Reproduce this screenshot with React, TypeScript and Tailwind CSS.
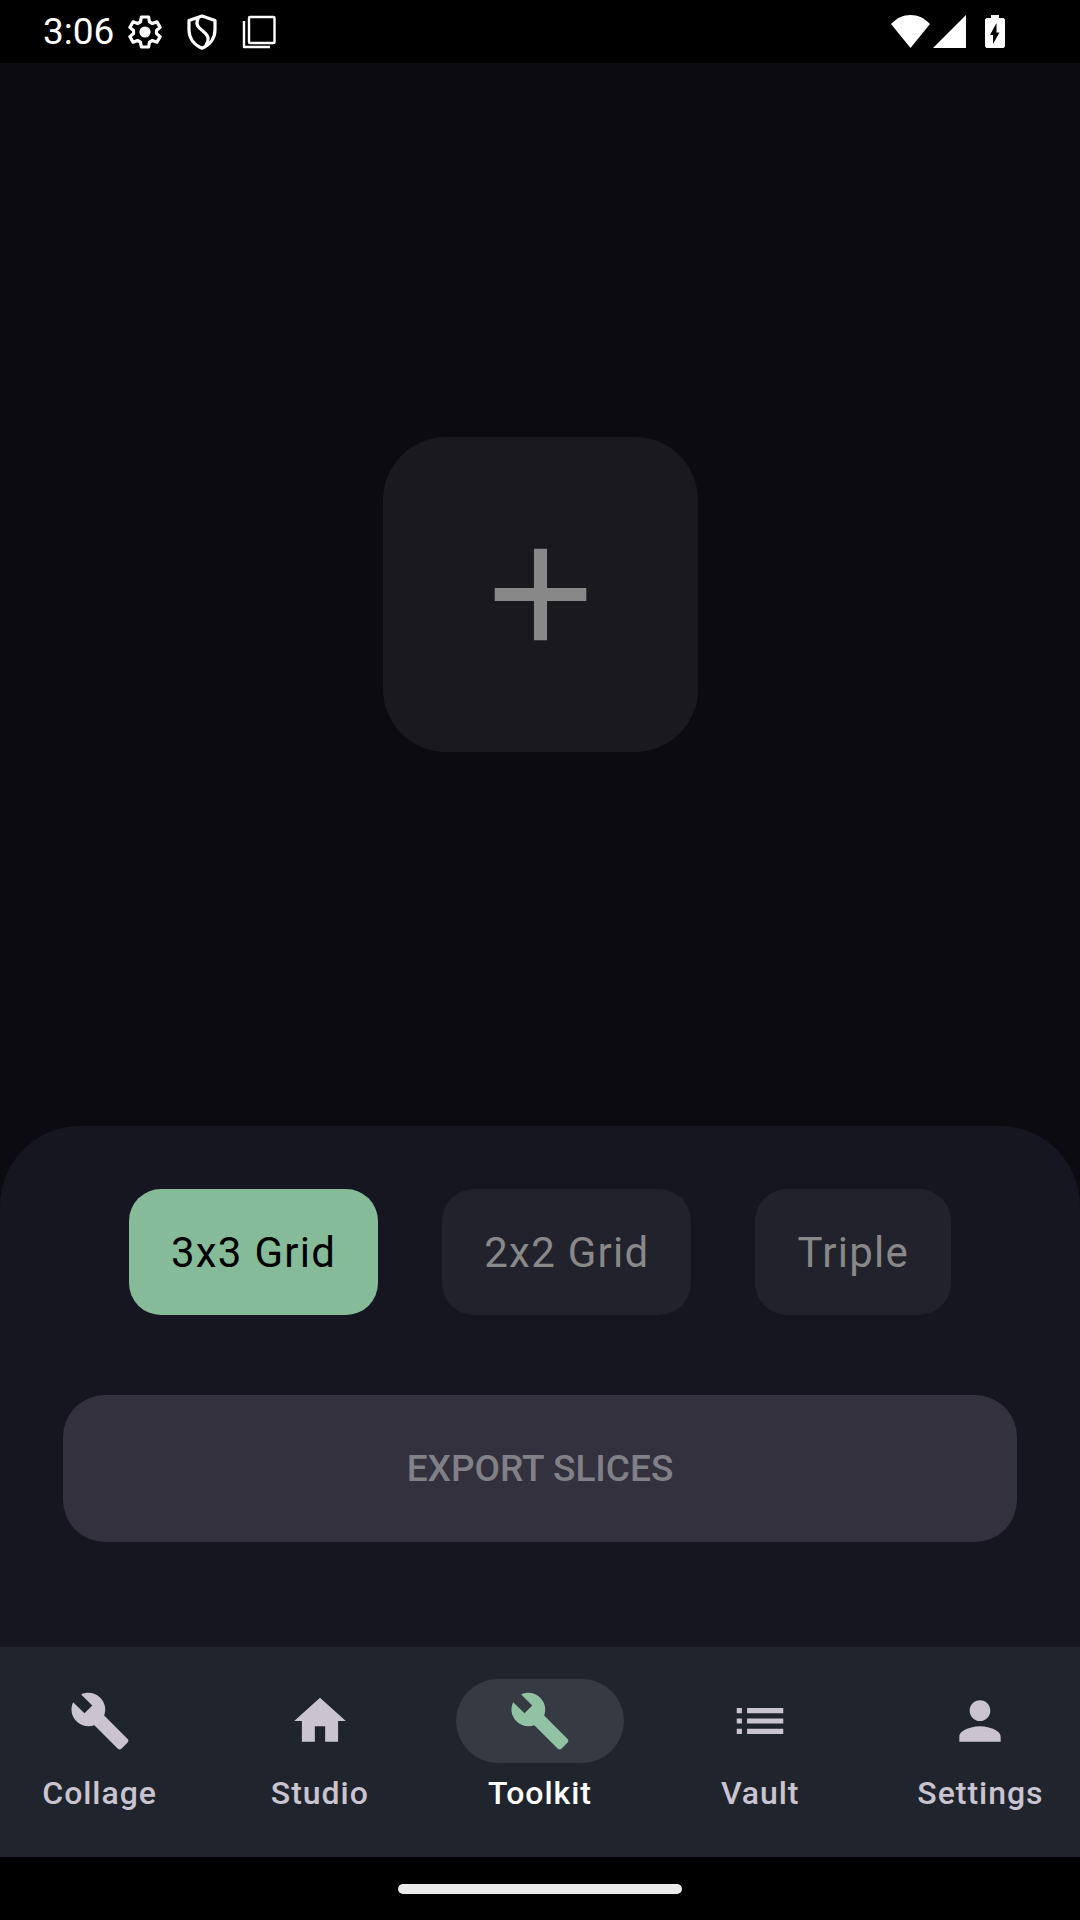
import { useState } from "react";
import { MdAdd, MdBuild, MdHome, MdList, MdPerson } from "react-icons/md";
import type { IconType } from "react-icons";

const GRIDS = ["3x3 Grid", "2x2 Grid", "Triple"];

const TABS: Array<{ label: string; icon: IconType }> = [
  { label: "Collage",  icon: MdBuild },
  { label: "Studio",   icon: MdHome },
  { label: "Toolkit",  icon: MdBuild },
  { label: "Vault",    icon: MdList },
  { label: "Settings", icon: MdPerson },
];

export default function App() {
  const [grid, setGrid] = useState("3x3 Grid");
  const [tab, setTab] = useState("Toolkit");

  return (
    <div className="min-h-screen flex flex-col bg-[#0c0b11] font-['Roboto',sans-serif]">
      <StatusBar />

      <main className="flex-1 flex flex-col">
        {/* Image picker */}
        <div className="flex-1 flex items-center justify-center">
          <button
            aria-label="Add image"
            className="size-[315px] rounded-[63px] bg-[#1a191e] text-[#888888] flex items-center justify-center"
          >
            <MdAdd size={157} />
          </button>
        </div>

        {/* Slice options */}
        <section className="bg-[#161621] rounded-t-[80px] px-[63px] pt-[63px] pb-[105px]">
          <div className="flex justify-center gap-16">
            {GRIDS.map((g) => (
              <button
                key={g}
                onClick={() => setGrid(g)}
                aria-pressed={g === grid}
                className={`h-[126px] px-[42px] rounded-[32px] text-[42px] tracking-[0.03em] ${
                  g === grid ? "bg-[#86bb9a] text-black" : "bg-[#22222d] text-[#888888]"
                }`}
              >
                {g}
              </button>
            ))}
          </div>
          <button
            disabled
            className="mt-20 w-full h-[147px] rounded-[42px] bg-[#32313d] text-[#818086] text-[37px] font-medium"
          >
            EXPORT SLICES
          </button>
        </section>
      </main>

      <nav className="grid grid-cols-5 gap-[21px] h-[210px] pt-8 bg-[#20242d]">
        {TABS.map(({ label, icon: Icon }) => {
          const active = label === tab;
          return (
            <button
              key={label}
              onClick={() => setTab(label)}
              aria-current={active ? "page" : undefined}
              className="flex flex-col items-center gap-[10px]"
            >
              <span
                className={`w-[168px] h-[84px] rounded-full flex items-center justify-center ${
                  active ? "bg-[#363a42] text-[#92c2a4]" : "text-[#cac4d0]"
                }`}
              >
                <Icon size={62} />
              </span>
              <span
                className={`text-[32px] leading-[40px] font-medium tracking-[0.03em] ${
                  active ? "text-white" : "text-[#cac4d0]"
                }`}
              >
                {label}
              </span>
            </button>
          );
        })}
      </nav>

      {/* Gesture bar */}
      <div className="h-[63px] bg-black flex items-center justify-center">
        <div className="w-[284px] h-[10px] rounded-full bg-[#ebebeb]" />
      </div>
    </div>
  );
}

function StatusBar() {
  return (
    <header className="h-[63px] pl-[43px] pr-[75px] bg-black text-white flex items-center justify-between">
      <div className="flex items-center">
        <span className="text-[37px] leading-[63px]">3:06</span>
        <div className="flex items-center gap-6 pl-[14px]">
          {/* Gear */}
          <svg viewBox="0 0 34 34" className="w-[34px] h-[34px]" fill="none" stroke="currentColor">
            <path
              d="M13.4 2h7.2l.9 4.8 2.9 1.7 4.5-1.7 3.2 5.6-3.6 3.1v3l3.6 3.1-3.2 5.6-4.5-1.7-2.9 1.7-.9 4.8h-7.2l-.9-4.8-2.9-1.7-4.5 1.7-3.2-5.6 3.6-3.1v-3l-3.6-3.1 3.2-5.6 4.5 1.7 2.9-1.7z"
              strokeWidth="3.2"
              strokeLinejoin="round"
            />
            <circle cx="17" cy="17" r="5.6" fill="currentColor" stroke="none" />
          </svg>
          {/* Shield */}
          <svg viewBox="0 0 32 36" className="w-8 h-9" fill="none" stroke="currentColor" strokeWidth="3.2" strokeLinejoin="round">
            <path d="M16 2 29 6.4V16c0 8.4-5.2 15-13 18.2C8.200 31 3 24.400 3 16V6.400z" />
            <path d="M12.500 3.600c-2.200 3.800-2 7.800 1 10.600 3.600 3.400 8 5.600 8.600 9.800.3 2.600-.7 5-2.300 7.300" />
          </svg>
          {/* Stacked frames */}
          <svg viewBox="0 0 34 34" className="w-[34px] h-[34px]" fill="none" stroke="currentColor" strokeWidth="2.4">
            <rect x="7" y="2" width="25.500" height="26" rx="1" />
            <path d="M2 6v26h26" strokeLinejoin="round" />
          </svg>
        </div>
      </div>

      <div className="flex items-center">
        {/* Wifi */}
        <svg viewBox="0 0 39 33" className="w-[39px] h-[33px]" fill="currentColor">
          <path d="M19.500 33 0 9C5.500 3.200 12.200 0 19.500 0S33.500 3.200 39 9z" />
        </svg>
        {/* Signal */}
        <svg viewBox="0 0 33 33" className="ml-[3px] w-[33px] h-[33px]" fill="currentColor">
          <path d="M33 0v33H0z" />
        </svg>
        {/* Battery, charging */}
        <svg viewBox="0 0 20 33" className="ml-[19px] w-5 h-[33px]" fill="currentColor">
          <path
            fillRule="evenodd"
            d="M6 0h8v3h4.500L20 4.500v27L18.500 33h-17L0 31.500v-27L1.500 3H6zM11.500 8 5 20h3v9l6.500-11.500h-3z"
          />
        </svg>
      </div>
    </header>
  );
}
